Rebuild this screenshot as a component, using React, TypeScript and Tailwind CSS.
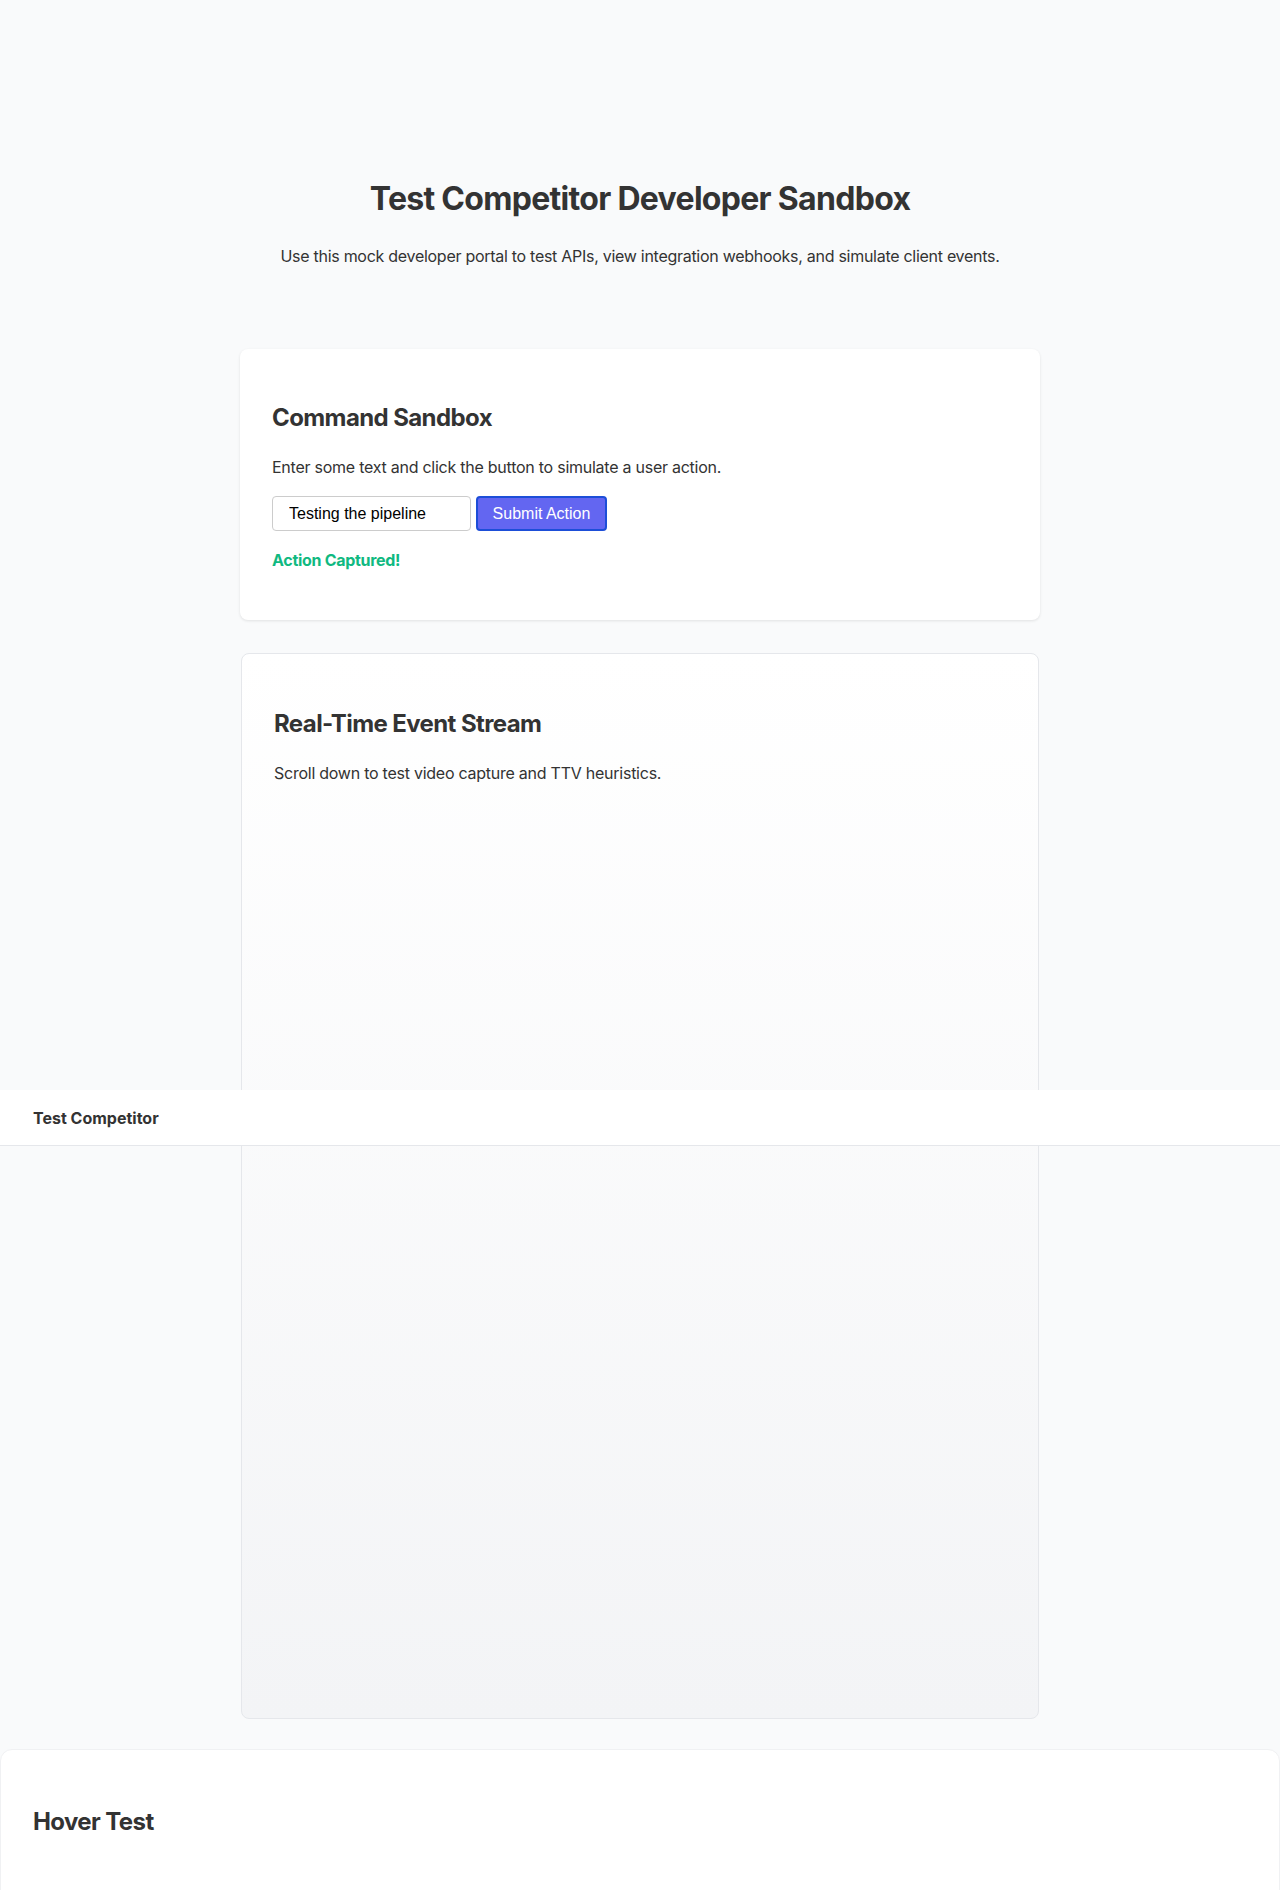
import { useState } from "react"

export default function App() {
  const [text, setText] = useState("Testing the pipeline")
  const [captured, setCaptured] = useState(true)

  return (
    <div
      className="relative min-h-[1890px] bg-[#f9fafb] text-[#333] overflow-hidden"
      style={{ fontFamily: "Inter, 'Noto Sans', sans-serif" }}
    >
      <header className="flex flex-col items-center pt-[180px]">
        <h1 className="text-[32px] font-bold leading-[38px] tracking-[-0.7px]">
          Test Competitor Developer Sandbox
        </h1>
        <p className="mt-[26px] text-[16px] leading-[24px] tracking-[-0.28px] text-[#333]">
          Use this mock developer portal to test APIs, view integration webhooks, and simulate client events.
        </p>
      </header>

      <main className="mt-[81px] flex flex-col items-center gap-[33px]">
        <section className="w-[800px] rounded-lg bg-white px-8 pt-[54px] pb-[48px] shadow-[0_1px_3px_rgba(0,0,0,0.1)]">
          <h2 className="text-[24px] font-bold leading-[29px] tracking-[-0.6px]">Command Sandbox</h2>
          <p className="mt-[22px] text-[16px] leading-[26px] tracking-[-0.25px]">
            Enter some text and click the button to simulate a user action.
          </p>
          <div className="mt-[16px] flex items-center gap-[5px]">
            <input
              value={text}
              onChange={(e) => setText(e.target.value)}
              className="h-[35px] w-[199px] rounded-[4px] border border-[#ccc] bg-white pl-[16px] text-[16px] text-black outline-none"
              style={{ fontFamily: "'Liberation Sans', Arial, sans-serif" }}
            />
            <button
              onClick={() => setCaptured(true)}
              className="h-[35px] w-[131px] rounded-[4px] border-2 border-[#1d4ed8] bg-[#6366f1] text-[16px] text-white"
              style={{ fontFamily: "'Liberation Sans', Arial, sans-serif" }}
            >
              Submit Action
            </button>
          </div>
          {captured && (
            <p className="mt-[17px] text-[16px] font-bold leading-[24px] tracking-[-0.3px] text-[#10b981]">
              Action Captured!
            </p>
          )}
        </section>

        <section className="h-[1066px] w-[798px] rounded-lg border border-[#e5e7eb] bg-gradient-to-b from-white to-[#f3f4f6] px-8 pt-[55px]">
          <h2 className="text-[24px] font-bold leading-[29px] tracking-[-0.6px]">Real-Time Event Stream</h2>
          <p className="mt-[22px] text-[16px] leading-[26px] tracking-[-0.25px]">
            Scroll down to test video capture and TTV heuristics.
          </p>
        </section>
      </main>

      <section className="mt-[30px] h-[170px] rounded-t-xl border border-[#f0f1f3] bg-white px-[32px] pt-[57px]">
        <h2 className="text-[24px] font-bold leading-[29px] tracking-[-0.6px]">Hover Test</h2>
      </section>

      {/* sticky top bar, caught mid-scroll over the stream card */}
      <nav className="absolute left-0 right-0 top-[1090px] flex h-[56px] items-center border-b border-[#e5e7eb] bg-white px-[33px]">
        <span className="text-[16px] font-bold">Test Competitor</span>
      </nav>
    </div>
  )
}
